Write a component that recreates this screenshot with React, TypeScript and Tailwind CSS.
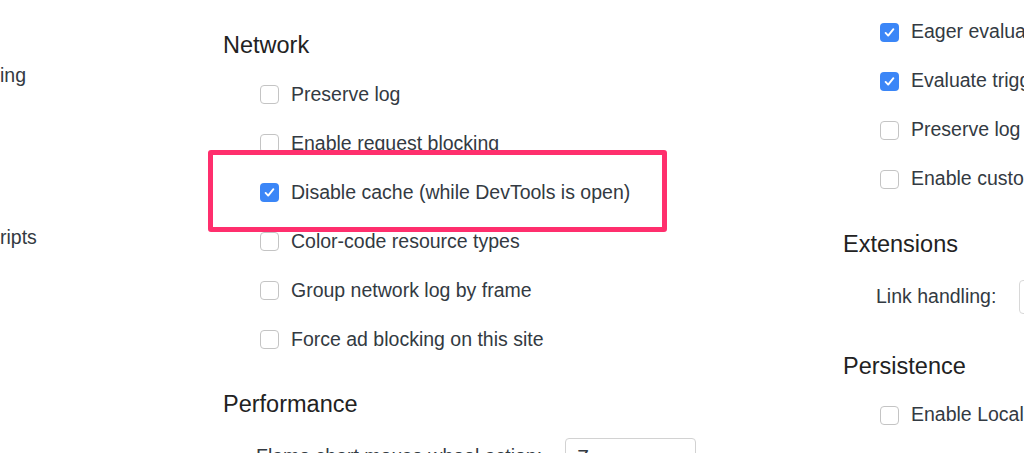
const font = { fontFamily: '"Liberation Sans", Arial, sans-serif' };

function Box({ checked }: { checked?: boolean }) {
  if (checked) {
    return (
      <span className="flex h-[19px] w-[19px] shrink-0 items-center justify-center rounded-[4px] bg-[#3b86f7]">
        <svg width="13" height="13" viewBox="0 0 13 13" aria-hidden="true">
          <path d="M2.6 6.9l2.6 2.7 5.2-6.4" fill="none" stroke="#fff" strokeWidth="1.9" strokeLinecap="round" strokeLinejoin="round" />
        </svg>
      </span>
    );
  }
  return <span className="h-[19px] w-[19px] shrink-0 rounded-[4px] border border-[#c4c4c4] bg-white" />;
}

function Check({ label, checked }: { label: string; checked?: boolean }) {
  return (
    <div className="flex h-[49px] items-center gap-[12px] pl-[37px] text-[19.5px] text-[#333a42]">
      <Box checked={checked} />
      <span className="whitespace-nowrap">{label}</span>
    </div>
  );
}

function Heading({ children, first }: { children: string; first?: boolean }) {
  return (
    <h2
      className={`mb-[9px] flex h-[30px] items-center whitespace-nowrap text-[23.5px] text-[#222222] ${first ? "" : "mt-[26px]"}`}
    >
      {children}
    </h2>
  );
}

export default function App() {
  return (
    <div className="relative h-[453px] w-[1024px] overflow-hidden bg-white" style={font}>
      <div className="flex h-full">
        {/* left column, mostly scrolled off */}
        <div className="w-[223px] shrink-0 text-[19.5px] text-[#333a42]">
          <div className="mt-[61px] flex h-[30px] items-center">ing</div>
          <div className="mt-[132px] flex h-[30px] items-center">ripts</div>
        </div>

        {/* middle column */}
        <div className="w-[620px] shrink-0 pt-[31px]">
          <Heading first>Network</Heading>
          <Check label="Preserve log" />
          <Check label="Enable request blocking" />
          <Check label="Disable cache (while DevTools is open)" checked />
          <Check label="Color-code resource types" />
          <Check label="Group network log by frame" />
          <Check label="Force ad blocking on this site" />
          <Heading>Performance</Heading>
          <div className="flex h-[60px] items-start gap-[12px] pl-[33px] text-[19.5px] leading-[20px] text-[#333a42]">
            <span className="mt-[17px] w-[297px] whitespace-nowrap">Flame chart mouse wheel action:</span>
            <div className="mt-[9px] h-[36px] w-[131px] rounded-[4px] border border-[#d2d2d2] bg-white px-[11px] pt-[8px]">
              Zoom
            </div>
          </div>
        </div>

        {/* right column */}
        <div className="min-w-0 flex-1 overflow-hidden pt-[7.5px]">
          <Check label="Eager evaluation" checked />
          <Check label="Evaluate triggers user activation" checked />
          <Check label="Preserve log upon navigation" />
          <Check label="Enable custom formatters" />
          <Heading>Extensions</Heading>
          <div className="flex h-[57px] items-center gap-[23px] pl-[33px] text-[19.5px] text-[#333a42]">
            <span className="whitespace-nowrap">Link handling:</span>
            <div className="h-[34px] w-[180px] shrink-0 rounded-[4px] border border-[#d8d8d8] bg-white" />
          </div>
          <Heading>Persistence</Heading>
          <Check label="Enable Local Overrides" />
        </div>
      </div>

      {/* highlight annotation */}
      <div className="absolute left-[208px] top-[150px] h-[82px] w-[459px] rounded-[3px] border-[5px] border-[#ff2f6d]" />
    </div>
  );
}
